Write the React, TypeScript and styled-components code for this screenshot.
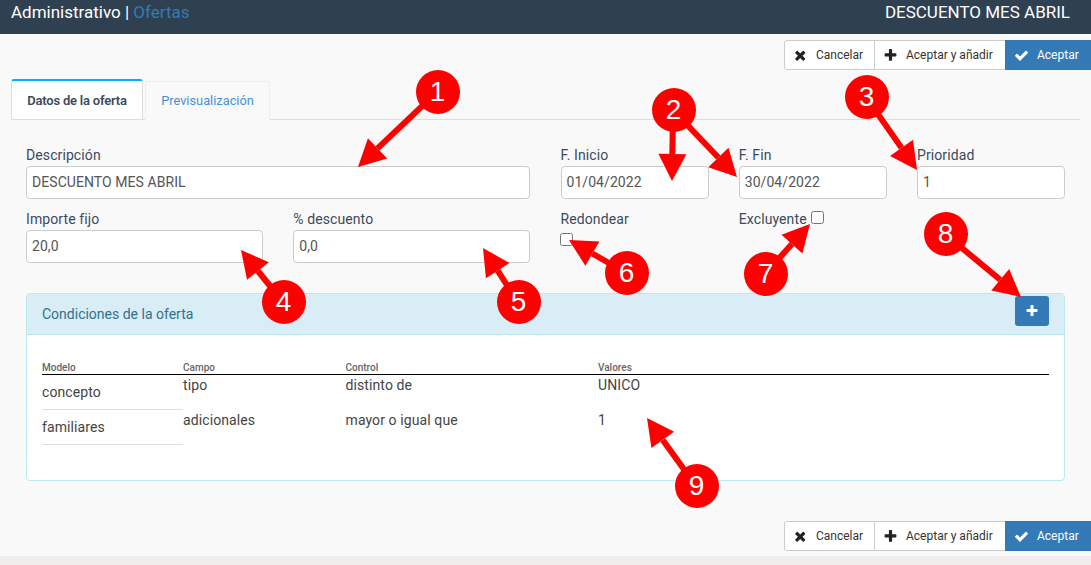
import React from 'react';
import styled, { createGlobalStyle } from 'styled-components';

const GlobalStyle = createGlobalStyle`
  html, body {
    margin: 0;
    padding: 0;
    background: #f9f9f9;
    font-family: Roboto, "Liberation Sans", sans-serif;
    color: #333;
  }
  * {
    box-sizing: border-box;
  }
`;

const Page = styled.div`
  position: relative;
  width: 1091px;
  height: 565px;
  overflow: hidden;
  display: flex;
  flex-direction: column;
`;

const TopBar = styled.header`
  height: 34px;
  flex: none;
  background: #2f4050;
  display: flex;
  justify-content: space-between;
  padding: 3px 21px 0 11px;
  font-size: 17px;
  line-height: 19px;
  color: #fff;
`;

const Section = styled.span`
  color: #337ab7;
`;

const Toolbar = styled.div<{ $top: number }>`
  display: flex;
  justify-content: flex-end;
  margin-top: ${(p) => p.$top}px;
  height: 30px;
  flex: none;
`;

const ToolButton = styled.div<{ $primary?: boolean; $width: number }>`
  width: ${(p) => p.$width}px;
  display: flex;
  align-items: center;
  gap: 8px;
  padding-left: 8px;
  font-size: 12px;
  margin-left: -1px;
  background: ${(p) => (p.$primary ? '#337ab7' : '#fff')};
  color: ${(p) => (p.$primary ? '#fff' : '#333')};
  border: 1px solid ${(p) => (p.$primary ? '#337ab7' : '#ccc')};
  &:first-child {
    border-radius: 3px 0 0 3px;
  }
  svg {
    flex: none;
    color: ${(p) => (p.$primary ? '#fff' : '#222')};
  }
`;

const Tabs = styled.div`
  display: flex;
  align-items: flex-end;
  gap: 2px;
  margin: 9px 11px 0 11px;
  height: 41px;
  flex: none;
  border-bottom: 1px solid #ddd;
`;

const Tab = styled.div<{ $active?: boolean }>`
  height: ${(p) => (p.$active ? 41 : 39)}px;
  margin-bottom: -1px;
  display: flex;
  align-items: center;
  justify-content: center;
  font-size: ${(p) => (p.$active ? 13 : 12.8)}px;
  font-weight: ${(p) => (p.$active ? 600 : 400)};
  letter-spacing: ${(p) => (p.$active ? '-0.2px' : '0')};
  width: ${(p) => (p.$active ? 132 : 125)}px;
  color: ${(p) => (p.$active ? '#3b4a5c' : '#4a90d9')};
  background: ${(p) => (p.$active ? '#fff' : '#f9f9f9')};
  border: 1px solid ${(p) => (p.$active ? '#ddd' : '#eee')};
  border-top: ${(p) => (p.$active ? '2px solid #00b0ff' : '1px solid #eee')};
  border-bottom-color: ${(p) => (p.$active ? '#ddd' : 'transparent')};
  border-radius: 3px 3px 0 0;
`;

const FormGrid = styled.div`
  display: grid;
  grid-template-columns: 237px 237px 148px 148px 148px;
  column-gap: 30.25px;
  padding: 27px 26px 0;
  flex: none;
`;

const Field = styled.div<{ $span?: number }>`
  grid-column: span ${(p) => p.$span ?? 1};
  height: 64px;
`;

const Label = styled.label`
  display: block;
  font-size: 14px;
  line-height: 16px;
  height: 19px;
  letter-spacing: 0.1px;
  color: #3b4a5c;
`;

const TextInput = styled.div`
  height: 33px;
  padding: 0 5px 2px;
  display: flex;
  align-items: center;
  background: #fff;
  border: 1px solid #ccc;
  border-radius: 4px;
  font-size: 14px;
  letter-spacing: 0.06px;
  color: #555;
`;

const Check = styled.span<{ $inline?: boolean }>`
  display: ${(p) => (p.$inline ? 'inline-block' : 'block')};
  width: 13px;
  height: 13px;
  background: #fff;
  border: 1px solid #767676;
  border-radius: 2.5px;
  margin: ${(p) => (p.$inline ? '0 0 0 4px' : '3px 0 0 -0.5px')};
  vertical-align: top;
`;

const Panel = styled.section`
  margin: 18px 26px 0;
  height: 188px;
  flex: none;
  background: #fff;
  border: 1px solid #bce8f1;
  border-radius: 4px;
`;

const PanelHeading = styled.div`
  height: 41px;
  background: #d9edf7;
  border-bottom: 1px solid #bce8f1;
  display: flex;
  align-items: center;
  justify-content: space-between;
  padding: 0 15px;
  font-size: 14px;
  color: #31708f;
`;

const AddButton = styled.div`
  width: 34px;
  height: 30px;
  margin-top: -7px;
  background: #337ab7;
  border-radius: 3px;
  color: #fff;
  display: flex;
  align-items: center;
  justify-content: center;
`;

const ConditionsTable = styled.div`
  margin: 26px 15px 0;
  display: grid;
  grid-template-columns: 141px 162.5px 252.5px 1fr;
  grid-template-rows: 14px 35px 35px;
  font-size: 14px;
  letter-spacing: 0.1px;
  color: #444;
`;

const HeaderCell = styled.div`
  font-size: 10px;
  line-height: 13px;
  font-weight: 500;
  letter-spacing: 0;
  color: #666;
  border-bottom: 1px solid #000;
`;

const ModelCell = styled.div`
  border-bottom: 1px solid #ddd;
  padding-top: 9px;
  line-height: 17px;
`;

const Cell = styled.div`
  line-height: 17px;
  padding-top: 2px;
`;

const Arrows = styled.svg`
  position: absolute;
  left: 0;
  top: 0;
  pointer-events: none;
`;

const Badge = styled.div<{ $x: number; $y: number }>`
  position: absolute;
  left: ${(p) => p.$x - 21.5}px;
  top: ${(p) => p.$y - 22}px;
  width: 44px;
  height: 44px;
  border-radius: 50%;
  background: #fe0000;
  color: #fff;
  font-family: "Liberation Sans", Arial, sans-serif;
  font-size: 28px;
  display: flex;
  align-items: center;
  justify-content: center;
`;

const BottomBand = styled.div`
  position: absolute;
  left: 0;
  right: 0;
  bottom: 0;
  height: 9px;
  background: #f1eded;
`;

// Font Awesome 4 style glyphs, the packaged set only has the rounder v5 ones
const ICONS = {
  times: {
    box: '-160 0 1792 1792',
    d: 'M1298 1299q0 40-28 68l-136 136q-28 28-68 28t-68-28l-294-294-294 294q-28 28-68 28t-68-28l-136-136q-28-28-28-68t28-68l294-294-294-294q-28-28-28-68t28-68l136-136q28-28 68-28t68 28l294 294 294-294q28-28 68-28t68 28l136 136q28 28 28 68t-28 68l-294 294 294 294q28 28 28 68z',
  },
  plus: {
    box: '0 0 1792 1792',
    d: 'M1600 736v192q0 40-28 68t-68 28h-416v416q0 40-28 68t-68 28h-192q-40 0-68-28t-28-68v-416h-416q-40 0-68-28t-28-68v-192q0-40 28-68t68-28h416v-416q0-40 28-68t68-28h192q40 0 68 28t28 68v416h416q40 0 68 28t28 68z',
  },
  check: {
    box: '0 0 1792 1792',
    d: 'M1671 566q0 40-28 68l-724 724-136 136q-28 28-68 28t-68-28l-136-136-362-362q-28-28-28-68t28-68l136-136q28-28 68-28t68 28l294 295 656-657q28-28 68-28t68 28l136 136q28 28 28 68z',
  },
};

const Icon: React.FC<{ name: keyof typeof ICONS; size?: number }> = ({ name, size = 15 }) => (
  <svg width={size} height={size} viewBox={ICONS[name].box} fill="currentColor">
    <path d={ICONS[name].d} />
  </svg>
);

// from = badge centre, tip = arrow head point
const arrows = [
  { from: [437, 92], tip: [358, 167] },
  { from: [673, 110], tip: [672, 181] },
  { from: [673, 110], tip: [737, 177] },
  { from: [866, 97], tip: [917, 170] },
  { from: [283, 302], tip: [241, 250] },
  { from: [518, 302], tip: [483, 248] },
  { from: [626, 273], tip: [569, 240] },
  { from: [765, 274], tip: [810, 224] },
  { from: [945, 234], tip: [1021, 297] },
  { from: [696, 486], tip: [647, 418] },
];

const badges = [
  { n: 1, x: 437, y: 92 },
  { n: 2, x: 673, y: 110 },
  { n: 3, x: 866, y: 97 },
  { n: 4, x: 283, y: 302 },
  { n: 5, x: 518, y: 302 },
  { n: 6, x: 626, y: 273 },
  { n: 7, x: 765, y: 274 },
  { n: 8, x: 945, y: 234 },
  { n: 9, x: 696, y: 486 },
];

const HEAD = 27;

const headBase = (from: number[], tip: number[]) => {
  const dx = tip[0] - from[0];
  const dy = tip[1] - from[1];
  const len = Math.hypot(dx, dy);
  return { ux: dx / len, uy: dy / len, x: tip[0] - (dx / len) * HEAD, y: tip[1] - (dy / len) * HEAD };
};

const headPoints = (from: number[], tip: number[]) => {
  const b = headBase(from, tip);
  return `${tip[0]},${tip[1]} ${b.x - b.uy * 14},${b.y + b.ux * 14} ${b.x + b.uy * 14},${b.y - b.ux * 14}`;
};

const Actions: React.FC<{ top: number }> = ({ top }) => (
  <Toolbar $top={top}>
    <ToolButton $width={91}><Icon name="times" />Cancelar</ToolButton>
    <ToolButton $width={132}><Icon name="plus" />Aceptar y añadir</ToolButton>
    <ToolButton $primary $width={86}><Icon name="check" />Aceptar</ToolButton>
  </Toolbar>
);

const App: React.FC = () => {
  return (
    <Page>
      <GlobalStyle />
      <TopBar>
        <div>Administrativo | <Section>Ofertas</Section></div>
        <div>DESCUENTO MES ABRIL</div>
      </TopBar>
      <Actions top={6} />
      <Tabs>
        <Tab $active>Datos de la oferta</Tab>
        <Tab>Previsualización</Tab>
      </Tabs>
      <FormGrid>
        <Field $span={2}>
          <Label>Descripción</Label>
          <TextInput>DESCUENTO MES ABRIL</TextInput>
        </Field>
        <Field>
          <Label>F. Inicio</Label>
          <TextInput>01/04/2022</TextInput>
        </Field>
        <Field>
          <Label>F. Fin</Label>
          <TextInput>30/04/2022</TextInput>
        </Field>
        <Field>
          <Label>Prioridad</Label>
          <TextInput>1</TextInput>
        </Field>
        <Field>
          <Label>Importe fijo</Label>
          <TextInput>20,0</TextInput>
        </Field>
        <Field>
          <Label>% descuento</Label>
          <TextInput>0,0</TextInput>
        </Field>
        <Field>
          <Label>Redondear</Label>
          <Check />
        </Field>
        <Field>
          <Label>Excluyente<Check $inline /></Label>
        </Field>
      </FormGrid>
      <Panel>
        <PanelHeading>
          Condiciones de la oferta
          <AddButton><Icon name="plus" size={14} /></AddButton>
        </PanelHeading>
        <ConditionsTable>
          <HeaderCell>Modelo</HeaderCell>
          <HeaderCell>Campo</HeaderCell>
          <HeaderCell>Control</HeaderCell>
          <HeaderCell>Valores</HeaderCell>
          <ModelCell>concepto</ModelCell>
          <Cell>tipo</Cell>
          <Cell>distinto de</Cell>
          <Cell>UNICO</Cell>
          <ModelCell>familiares</ModelCell>
          <Cell>adicionales</Cell>
          <Cell>mayor o igual que</Cell>
          <Cell>1</Cell>
        </ConditionsTable>
      </Panel>
      <Actions top={40} />
      <BottomBand />
      <Arrows width={1091} height={565}>
        {arrows.map((a, i) => {
          const b = headBase(a.from, a.tip);
          return (
            <g key={i}>
              <line x1={a.from[0]} y1={a.from[1]} x2={b.x} y2={b.y} stroke="#fe0000" strokeWidth={6} />
              <polygon points={headPoints(a.from, a.tip)} fill="#fe0000" />
            </g>
          );
        })}
      </Arrows>
      {badges.map((b) => (
        <Badge key={b.n} $x={b.x} $y={b.y}>{b.n}</Badge>
      ))}
    </Page>
  );
};

export default App;
